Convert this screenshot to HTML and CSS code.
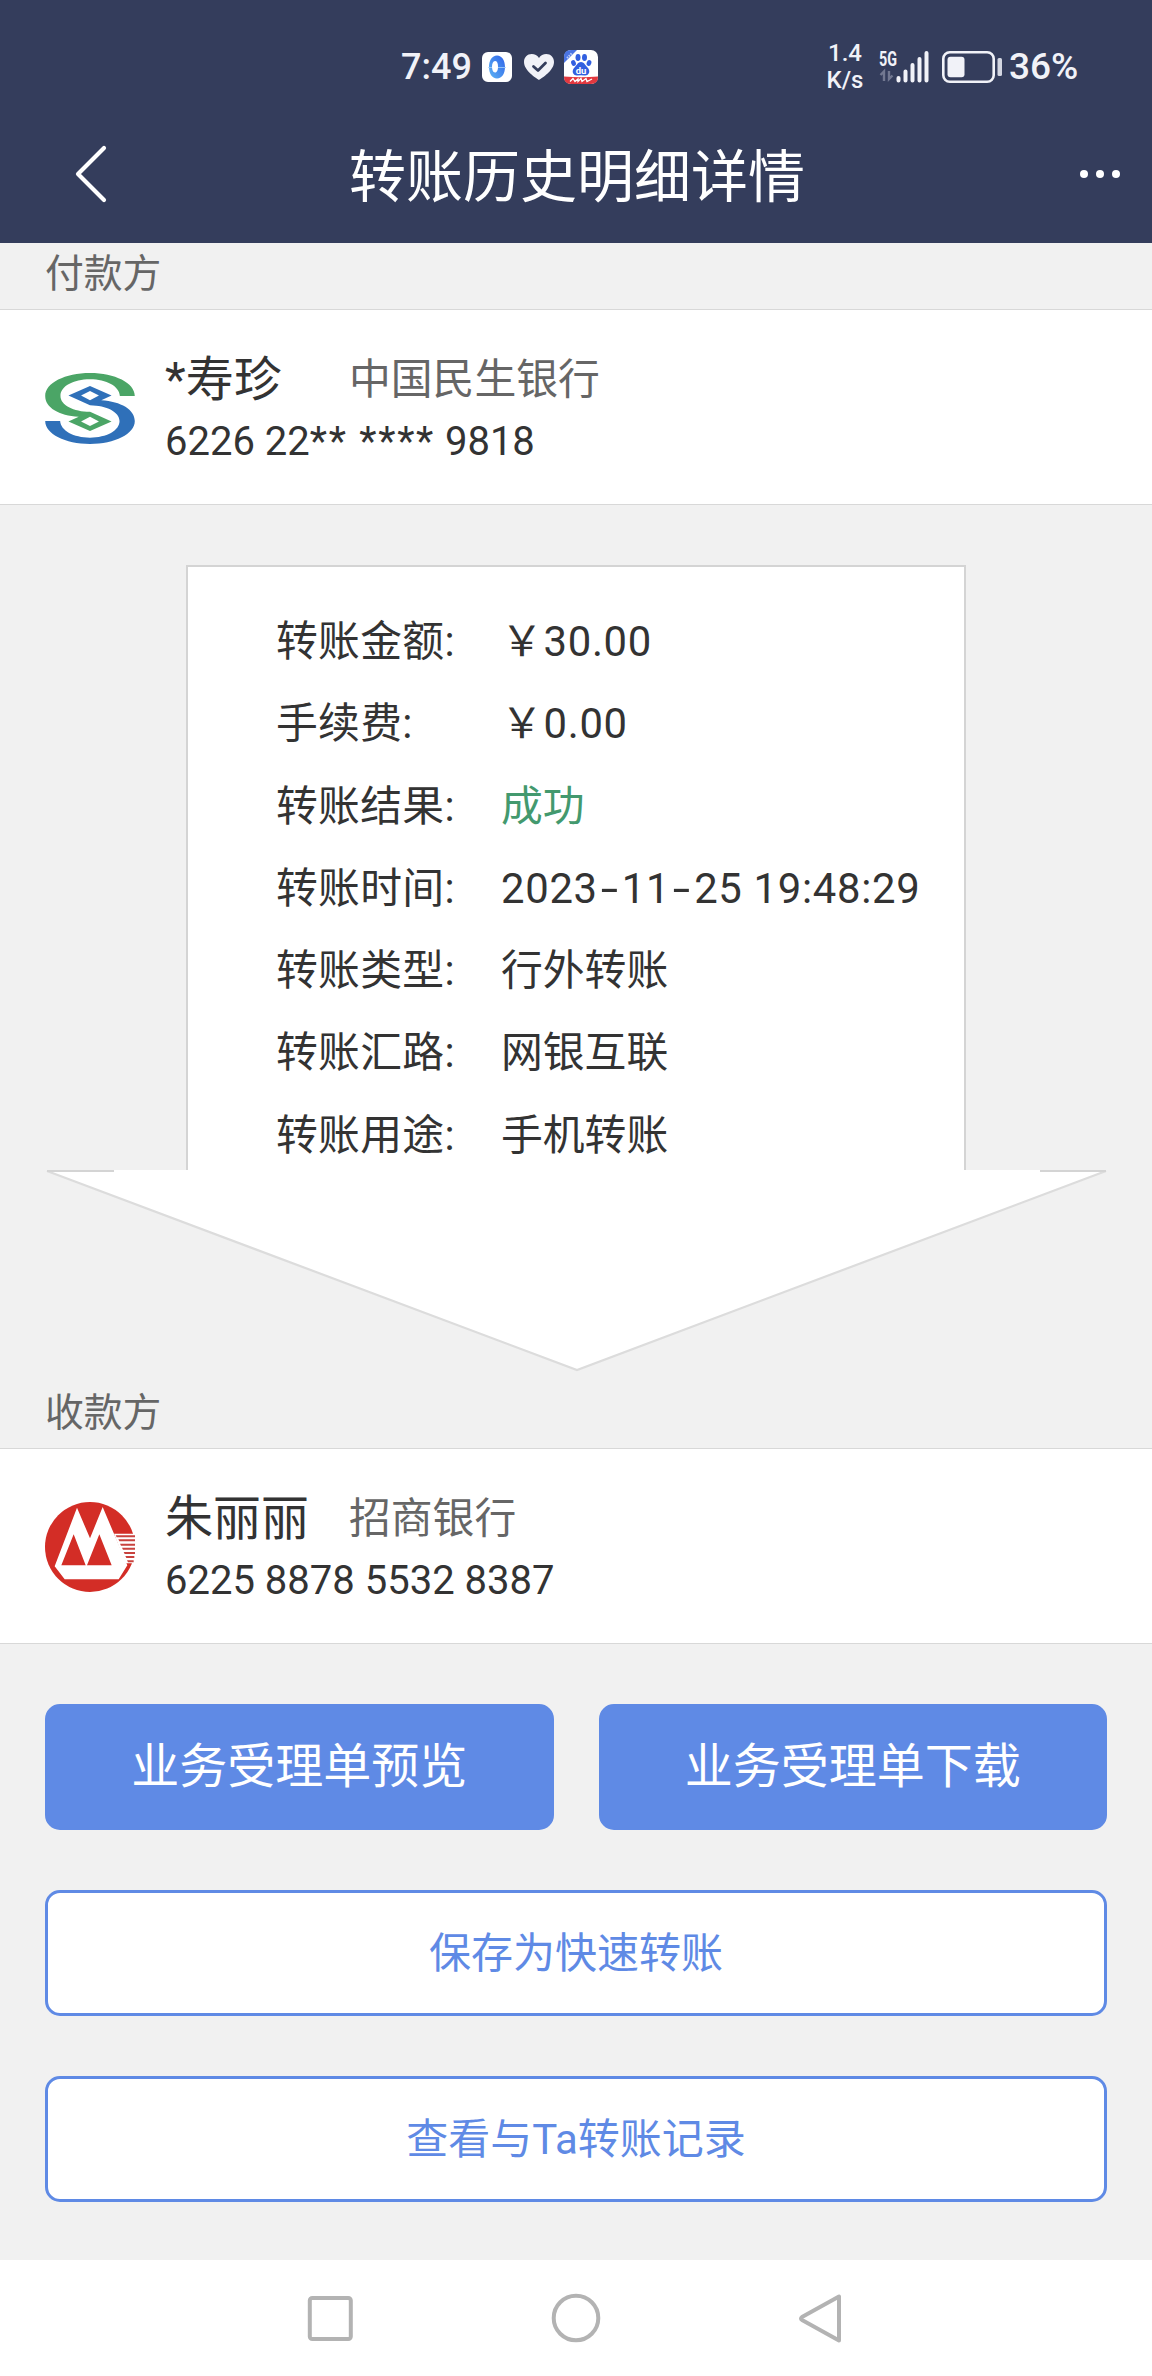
FILE: index.html
```html
<!DOCTYPE html>
<html lang="zh-CN">
<head>
<meta charset="utf-8">
<title>转账历史明细详情</title>
<link rel="stylesheet" href="styles.css">
</head>
<body>
<header class="top">
  <div class="status">
    <span class="clock">7:49</span>
    <svg class="app-ring" viewBox="0 0 30 30" width="30" height="30">
      <defs><linearGradient id="ring" x1="0" y1="1" x2="1" y2="0"><stop offset="0" stop-color="#5db4f4"/><stop offset="1" stop-color="#2f62e8"/></linearGradient></defs>
      <rect width="30" height="30" rx="6" fill="#fff"/>
      <path fill="url(#ring)" fill-rule="evenodd" d="M15 3.500C20 3.500 23 8.500 23 15S20 26.500 15 26.500 7 21.500 7 15 10 3.500 15 3.500ZM13 9C11 9 10 11.500 10 14.500S11 20.500 13 20.500 16 18 16 14.500 15 9 13 9Z"/>
      <path d="M6 15.500H10M16 15.500H24" stroke="#a8d2fa" stroke-width=".8"/>
    </svg>
    <svg class="app-heart" viewBox="0 0 30 26" width="30" height="26">
      <path fill="#f1f2f8" d="M15 26C12 24 0 16.500 0 8 0 3.500 3.300 0 7.700 0 10.700 0 13.500 1.500 15 4 16.500 1.500 19.300 0 22.300 0 26.700 0 30 3.500 30 8 30 16.500 18 24 15 26Z"/>
      <path fill="none" stroke="#343d5c" stroke-width="2.800" stroke-linecap="round" stroke-linejoin="round" d="M9.500 12.500 14 16.500 21.500 9"/>
    </svg>
    <svg class="app-paw" viewBox="0 0 34 34" width="34" height="34">
      <rect width="34" height="34" rx="7" fill="#fff"/>
      <path fill="#4a74e4" d="M7 0H13L0 13V7Q0 0 7 0Z"/>
      <path d="M3 8 8 3" stroke="#b9caf7" stroke-width="2" stroke-dasharray="1.500 1"/>
      <path fill="#e2383f" d="M0 26.500Q17 28 34 26.500V27Q34 34 27 34H7Q0 34 0 27Z"/>
      <g fill="#315fe0">
        <ellipse cx="14" cy="7.500" rx="2.500" ry="3.400"/><ellipse cx="20.500" cy="7.500" rx="2.500" ry="3.400"/>
        <ellipse cx="9.500" cy="13" rx="2.300" ry="3" transform="rotate(-20 9.500 13)"/><ellipse cx="25" cy="13" rx="2.300" ry="3" transform="rotate(20 25 13)"/>
        <path d="M17 12C20 12 21 15 23.500 17.500 27 21 25 26 20.500 25.500Q17 24.800 13.500 25.500C9 26 7 21 10.500 17.500 13 15 14 12 17 12Z"/>
      </g>
      <text x="17" y="24" text-anchor="middle" font-size="9.500" font-weight="700" fill="#fff">du</text>
      <path d="M6 31.500 9 28.500 11 31.500 14 29V31.500L17 28.500 18 31.500 22 28.500 23 31.500 28 29" stroke="#fff" stroke-width="1.300" fill="none"/>
    </svg>
    <div class="speed"><span>1.4</span><span>K/s</span></div>
    <svg class="signal" viewBox="0 0 52 34" width="52" height="34">
      <text x="0" y="15.500" font-size="20" font-weight="700" textLength="18" lengthAdjust="spacingAndGlyphs" fill="#f1f2f8">5G</text>
      <path fill="none" stroke="#727891" stroke-width="2.400" d="M1.500 25 5 21.500V31M10 21V29L13.500 25.500"/>
      <path stroke="#f1f2f8" stroke-width="4" stroke-linecap="round" d="M19.500 28V30.500M26.500 21.500V30.500M33.500 15V30.500M40.500 9V30.500M47.500 3V30.500"/>
    </svg>
    <svg class="battery" viewBox="0 0 60 32" width="60" height="32">
      <rect x="1.300" y="1.300" width="50.400" height="29.400" rx="6.500" fill="none" stroke="#f1f2f8" stroke-width="2.600"/>
      <rect x="5.500" y="5.800" width="17" height="20.400" rx="3" fill="#f1f2f8"/>
      <rect x="55.500" y="7" width="4.500" height="18" rx="1.500" fill="#d3d6e1"/>
    </svg>
    <span class="percent">36%</span>
  </div>
  <div class="titlebar">
    <svg class="back" viewBox="0 0 34 58" width="34" height="58"><path d="M30 3 4 29 30 55" fill="none" stroke="#fff" stroke-width="4.200" stroke-linecap="round" stroke-linejoin="round"/></svg>
    <h1>转账历史明细详情</h1>
    <svg class="more" viewBox="0 0 42 10" width="42" height="10" fill="#fff"><circle cx="5" cy="5" r="4"/><circle cx="21" cy="5" r="4"/><circle cx="37" cy="5" r="4"/></svg>
  </div>
</header>

<main>
  <h2 class="section payer-title">付款方</h2>
  <section class="party">
    <svg class="logo" viewBox="45 68 270 214" width="90" height="71">
      <defs><path id="s-half" fill-rule="evenodd" d="M315 137H270C268 108 230 87 180 87 130 87 91 108 91 137 91 165 130 184 180 185L245 214 180 243 115 214 146 200C86 196 45 172 45 137 45 98 105 68 180 68 255 68 315 98 315 137ZM180 200 153 214 180 228 207 214Z"/></defs>
      <use href="#s-half" fill="#4ba566"/>
      <use href="#s-half" fill="#2f70b9" transform="rotate(180 180 175)"/>
    </svg>
    <div class="info">
      <div class="who"><strong class="name">*寿珍</strong><span class="bank">中国民生银行</span></div>
      <div class="account">6226 22<span class="mask">** ****</span> 9818</div>
    </div>
  </section>

  <section class="detail">
    <dl class="card">
      <dt>转账金额:</dt><dd class="num">￥30.00</dd>
      <dt>手续费:</dt><dd class="num">￥0.00</dd>
      <dt>转账结果:</dt><dd class="ok">成功</dd>
      <dt>转账时间:</dt><dd class="num">2023<i>-</i>11<i>-</i>25 19:48:29</dd>
      <dt>转账类型:</dt><dd>行外转账</dd>
      <dt>转账汇路:</dt><dd>网银互联</dd>
      <dt>转账用途:</dt><dd>手机转账</dd>
    </dl>
    <svg class="arrow" viewBox="0 0 1152 204" width="1152" height="204">
      <path fill="#fff" d="M47 1H114V0H1040V1H1106L577 200Z"/>
      <path fill="none" stroke="#dcdcdc" stroke-width="2.200" d="M47 1 577 200 1106 1"/>
      <path stroke="#d4d4d4" stroke-width="2" d="M47 1H114M1040 1H1106"/>
    </svg>
  </section>

  <h2 class="section payee-title">收款方</h2>
  <section class="party">
    <svg class="logo" viewBox="9 9 270 270" width="90" height="90">
      <circle cx="144" cy="144" r="135" fill="#d32d26"/>
      <path fill="#fff" d="M216 104H280V193H250Z"/>
      <path fill="#c8423e" d="M221 109H279V115H224ZM229 121H279V127H232ZM234 134H279V140H237ZM240 146H279V152H243ZM245 159H279V165H248ZM250 171H277V177H253ZM255 184H275V190H258Z"/>
      <path fill="#fff" d="M105 26 144 118 182 24 256 199 230 241H68L38 202Z"/>
      <path fill="#d32d26" d="M95 106 131 199H58ZM172 106 209 199H135Z"/>
    </svg>
    <div class="info">
      <div class="who"><strong class="name">朱丽丽</strong><span class="bank">招商银行</span></div>
      <div class="account">6225 8878 5532 8387</div>
    </div>
  </section>

  <div class="actions">
    <button class="btn solid">业务受理单预览</button>
    <button class="btn solid">业务受理单下载</button>
    <button class="btn outline">保存为快速转账</button>
    <button class="btn outline">查看与Ta转账记录</button>
  </div>
</main>

<nav class="sysnav">
  <svg viewBox="0 0 50 50" width="50" height="50"><rect x="4.800" y="5" width="41" height="41" rx="2.500"/></svg>
  <svg viewBox="0 0 50 50" width="50" height="50"><circle cx="25" cy="25" r="22.300"/></svg>
  <svg viewBox="0 0 50 50" width="50" height="50"><path d="M42 3.500V47.500L5 27Q3 25.500 5 24Z"/></svg>
</nav>
</body>
</html>
```
FILE: styles.css
```css
* { box-sizing: border-box; margin: 0; padding: 0; }

body {
  width: 1152px;
  background: #f1f1f1;
  color: #333;
  font-family: Roboto, "Noto Sans CJK SC", sans-serif;
}

svg { display: block; flex: none; overflow: visible; }

.top { height: 243px; background: #343d5c; color: #f1f2f8; }

.status { display: flex; align-items: center; height: 134px; padding-left: 401px; }
.clock, .percent { font-size: 36px; line-height: 42px; font-weight: 500; white-space: nowrap; }
.clock { width: 81px; }
.app-heart { margin-left: 12px; }
.app-paw { margin-left: 10px; }
.speed {
  display: flex; flex-direction: column; align-items: center;
  width: 40px; margin-left: 227px;
  font-size: 24px; line-height: 27px; font-weight: 500;
}
.signal { margin-left: 14px; }
.battery { margin-left: 11px; }
.percent { margin-left: 7px; font-size: 37px; }

.titlebar { display: flex; align-items: center; height: 80px; padding: 0 31px 0 74px; color: #fff; }
.titlebar h1 { flex: 1; margin-left: 241px; padding-top: 8px; font-size: 57px; line-height: 80px; font-weight: 400; white-space: nowrap; }

.section { padding-left: 45px; color: #666; font-size: 38.8px; font-weight: 400; }
.payer-title { height: 66px; line-height: 62px; }
.payee-title { height: 66px; margin-top: 8px; line-height: 61px; }

.party {
  display: flex; align-items: center; height: 196px; padding-left: 45px;
  background: #fff; border-top: 1px solid #d8d8d8; border-bottom: 1px solid #d8d8d8;
}
.logo { margin-top: 2px; }
.info { margin-left: 30px; padding-top: 5px; }
.who { display: grid; grid-template-columns: 184px auto; align-items: center; height: 64px; color: #666; }
.name { color: #333; font-size: 48px; font-weight: 400; line-height: 64px; }
.bank { font-size: 41.8px; line-height: 64px; }
.account { font-size: 40px; line-height: 60px; white-space: nowrap; }
.mask { letter-spacing: 1.7px; }

.detail { padding-top: 60px; }
.card {
  display: grid; grid-template-columns: 225px 1fr; grid-auto-rows: 82.3px;
  width: 780px; height: 605px; margin-left: 186px; padding: 34px 0 0 88px;
  background: #fff; border: 2px solid #d4d4d4; border-bottom: 0;
  font-size: 41.8px; line-height: 82.3px; white-space: nowrap;
}
.card i { display: inline-block; width: 24px; text-align: center; font-style: normal; transform: scaleX(1.5); }
.card dt { letter-spacing: .3px; }
.card .num { letter-spacing: .7px; }
.ok { color: #43996e; }

.actions { display: grid; grid-template-columns: 1fr 1fr; gap: 60px 45px; padding: 60px 45px 58px; }
.btn {
  height: 126px; border: 3px solid #5f8ae5; border-radius: 15px;
  font-family: inherit; font-size: 48px; line-height: 120px;
}
.solid { background: #5f8ae5; color: #fff; }
.outline { grid-column: 1 / -1; padding-top: 2px; background: #fff; color: #5f8ae5; font-size: 42px; line-height: 118px; }

.sysnav { display: flex; justify-content: center; gap: 196px; height: 116px; padding-top: 33px; background: #fff; }
.sysnav svg { fill: none; stroke: #b3b3b3; stroke-width: 4; stroke-linejoin: round; }
```
